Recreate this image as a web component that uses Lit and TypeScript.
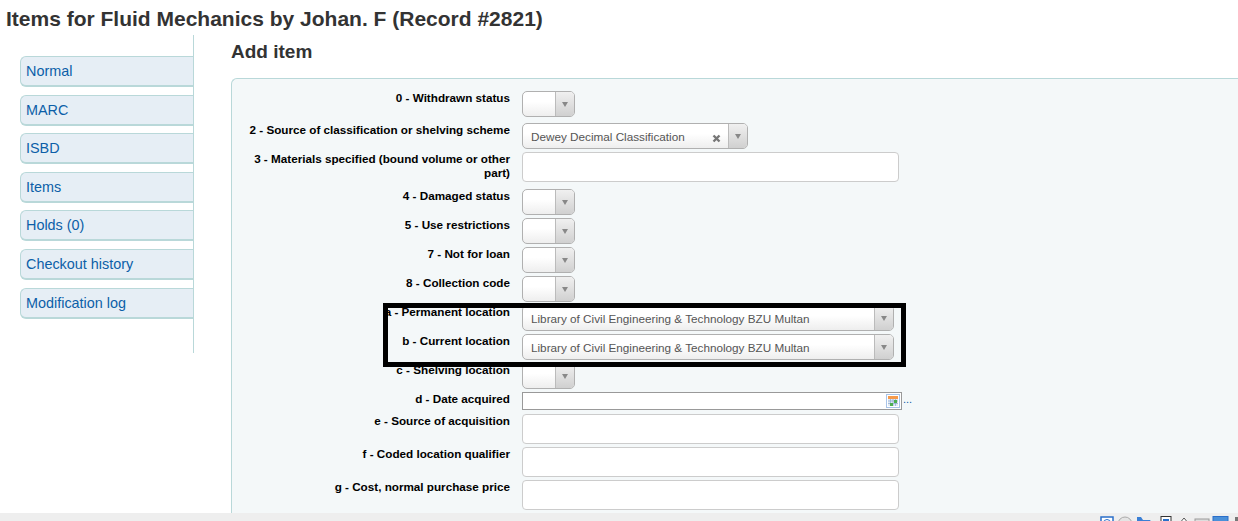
import { LitElement, html, css, svg } from "lit";
import { customElement } from "lit/decorators.js";

type Row = { label: string; kind: "select" | "input" | "date"; value?: string; wide?: "source" | "loc"; gap: number; h?: number; clear?: boolean };

const tabs = ["Normal", "MARC", "ISBD", "Items", "Holds (0)", "Checkout history", "Modification log"];
const rows: Row[] = [
  { label: "0 - Withdrawn status", kind: "select", gap: 6 },
  { label: "2 - Source of classification or shelving scheme", kind: "select", value: "Dewey Decimal Classification", wide: "source", clear: true, gap: 3 },
  { label: "3 - Materials specified (bound volume or other part)", kind: "input", h: 30, gap: 7 },
  { label: "4 - Damaged status", kind: "select", gap: 3 },
  { label: "5 - Use restrictions", kind: "select", gap: 3 },
  { label: "7 - Not for loan", kind: "select", gap: 3 },
  { label: "8 - Collection code", kind: "select", gap: 3 },
  { label: "a - Permanent location", kind: "select", value: "Library of Civil Engineering & Technology BZU Multan", wide: "loc", gap: 3 },
  { label: "b - Current location", kind: "select", value: "Library of Civil Engineering & Technology BZU Multan", wide: "loc", gap: 3 },
  { label: "c - Shelving location", kind: "select", gap: 3 },
  { label: "d - Date acquired", kind: "date", gap: 4 },
  { label: "e - Source of acquisition", kind: "input", h: 30, gap: 3 },
  { label: "f - Coded location qualifier", kind: "input", h: 30, gap: 3 },
  { label: "g - Cost, normal purchase price", kind: "input", h: 30, gap: 3 },
];

@customElement("app-root")
export class AppRoot extends LitElement {
  static styles = css`
    :host { display: block; position: relative; width: 1238px; height: 521px; overflow: hidden; background: #fff;
      font-family: "Liberation Sans", Arial, sans-serif; color: #333; }
    h1 { margin: 0; padding: 7px 0 0 6px; height: 28px; font-size: 21px; line-height: 24px; font-weight: bold; color: #333; white-space: nowrap; }
    .main { display: flex; height: 478px; overflow: hidden; }
    .side { width: 194px; height: 318px; flex: none; box-sizing: border-box; padding: 21px 0 0 20px; border-right: 1px solid #b9d8d9; }
    .tab { display: flex; align-items: center; box-sizing: border-box; height: 31px; margin-bottom: 7.6px; padding-left: 5px;
      background: #e6eef5; border: 1px solid #b9d8d9; border-bottom-width: 2px; border-right: 0; border-radius: 6px 0 0 6px;
      color: #0c5fa8; font-size: 14.4px; }
    .content { flex: 1; padding-left: 37px; min-width: 0; }
    h2 { margin: 0; height: 43px; padding-top: 6px; box-sizing: border-box; font-size: 19px; line-height: 22px; font-weight: bold; color: #333; }
    fieldset { display: block; margin: 0; box-sizing: border-box; height: 435px; padding: 12px 0 0 0; background: #f4f8f9;
      border: 1px solid #b9d8d9; border-right: 0; border-bottom: 0; border-radius: 6px 0 0 0; }
    .row { display: flex; align-items: flex-start; }
    .lab { width: 278px; flex: none; text-align: right; font-size: 11.7px; line-height: 14px; font-weight: bold; color: #000; }
    .ctl { margin-left: 12px; flex: none; display: flex; align-items: flex-start; }
    .sel { display: flex; box-sizing: border-box; height: 26px; width: 53px; background: linear-gradient(#fff 40%, #eee); border: 1px solid #b0b0b0; border-radius: 5px; }
    .sel.source { width: 226px; }
    .sel.loc { width: 372px; }
    .val { flex: 1; min-width: 0; padding: 6px 0 0 8px; font-size: 11.72px; line-height: 14px; color: #555; white-space: nowrap; position: relative; }
    .x { position: absolute; right: 7px; top: 10px; width: 9px; height: 9px; display: block; }
    .arrow { width: 19px; flex: none; box-sizing: border-box; border-left: 1px solid #bbb; background: linear-gradient(#f0f0f0, #d0d0d0); border-radius: 0 4px 4px 0;
      display: flex; align-items: center; justify-content: center; }
    .tri { width: 0; height: 0; border-left: 3.5px solid transparent; border-right: 3.5px solid transparent; border-top: 5px solid #888; }
    .inp { box-sizing: border-box; width: 377px; background: #fff; border: 1px solid #ccc; border-radius: 4px; }
    .date { display: flex; align-items: center; justify-content: flex-end; box-sizing: border-box; width: 380px; height: 18px; background: #fff; border: 1px solid #999; padding-right: 1px; }
    .cal { display: block; width: 14px; height: 14px; }
    .dots { font-size: 11px; line-height: 14px; color: #0c5fa8; margin-left: 1px; }
    .foot { height: 8px; box-sizing: border-box; padding-top: 3px; background: #eee; display: flex; justify-content: flex-end; overflow: hidden; }
    .foot svg { display: block; width: 138px; height: 14px; flex: none; }
    .mark { position: absolute; left: 383px; top: 303px; width: 523px; height: 64px; box-sizing: border-box; border: 5px solid #000; pointer-events: none; }
  `;

  private control(r: Row) {
    if (r.kind === "select") {
      return html`<div class="sel ${r.wide ?? ""}">
        <div class="val">${r.value ?? ""}${r.clear
          ? html`<svg class="x" viewBox="0 0 9 9"><path d="M1.5 1.5l6 6M7.5 1.5l-6 6" stroke="#777" stroke-width="2.4" fill="none"/></svg>`
          : ""}</div>
        <div class="arrow"><div class="tri"></div></div>
      </div>`;
    }
    if (r.kind === "date") {
      return html`<div class="date"><svg class="cal" viewBox="0 0 14 14">
          <rect x="0.5" y="0.5" width="13" height="13" fill="#fff" stroke="#a9c4e8"/>
          <rect x="2" y="2" width="10" height="3" fill="#f59a4b"/>
          <path d="M2 5h10v7H2z" fill="#dfe9f5"/>
          <path d="M2 7h10M2 9.5h10M4.5 5v7M7 5v7M9.5 5v7" stroke="#8aa7cf" stroke-width="0.7" fill="none"/>
          <rect x="8" y="6" width="3" height="3" fill="#4caf50"/>
          <rect x="4" y="9" width="3" height="3" fill="#4caf50"/>
        </svg></div><span class="dots">...</span>`;
    }
    return html`<div class="inp" style="height:${r.h}px"></div>`;
  }

  render() {
    return html`
      <h1>Items for Fluid Mechanics by Johan. F (Record #2821)</h1>
      <div class="main">
        <nav class="side">${tabs.map((t) => html`<div class="tab">${t}</div>`)}</nav>
        <div class="content">
          <h2>Add item</h2>
          <fieldset>
            ${rows.map((r) => html`<div class="row" style="margin-bottom:${r.gap}px">
              <div class="lab">${r.label}</div>
              <div class="ctl">${this.control(r)}</div>
            </div>`)}
          </fieldset>
        </div>
      </div>
      <div class="foot">
        <svg viewBox="0 0 138 14">
          ${svg`<rect x="1" y="1" width="12" height="12" fill="#fff" stroke="#2a6fc9" stroke-width="1.5"/>
          <circle cx="7" cy="7" r="3.5" fill="none" stroke="#2a6fc9"/>
          <circle cx="25" cy="8" r="7" fill="#e4e4e4" stroke="#aaa"/>
          <circle cx="25" cy="8" r="3" fill="#ccc"/>
          <path d="M37 10V1h4l2 3h7l2 3v3z" fill="#3a7fd5"/>
          <rect x="61" y="0.5" width="10" height="11" fill="#fff" stroke="#333"/>
          <rect x="63" y="3" width="6" height="8" fill="#2a6fc9"/>
          <path d="M79 8l5-6 5 6z" fill="#fff" stroke="#555"/>
          <rect x="95" y="3" width="14" height="8" fill="#ddd" stroke="#999"/>
          <rect x="113" y="0.5" width="15" height="11" fill="#4a90d9" stroke="#2a6fc9"/>
          <path d="M132 10V5h3V1h3v9z" fill="#777"/>`}
        </svg>
      </div>
      <div class="mark"></div>
    `;
  }
}
